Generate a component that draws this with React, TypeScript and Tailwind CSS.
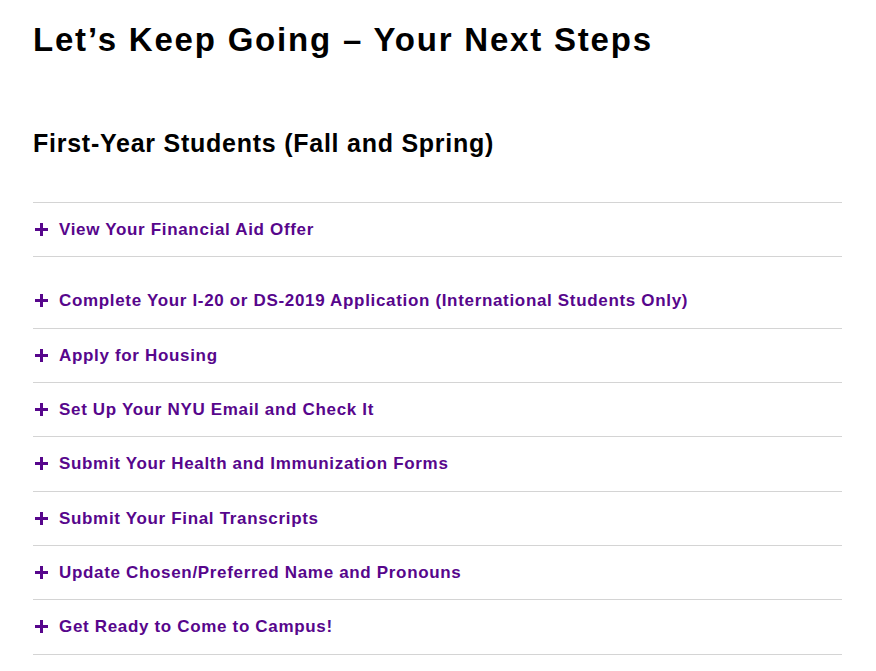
const steps = [
  "View Your Financial Aid Offer",
  "Complete Your I-20 or DS-2019 Application (International Students Only)",
  "Apply for Housing",
  "Set Up Your NYU Email and Check It",
  "Submit Your Health and Immunization Forms",
  "Submit Your Final Transcripts",
  "Update Chosen/Preferred Name and Pronouns",
  "Get Ready to Come to Campus!",
]

function Plus() {
  return (
    <svg width="13" height="13" viewBox="0 0 13 13" className="shrink-0">
      <rect x="5" y="0" width="3" height="13" fill="#57068c" />
      <rect x="0" y="5" width="13" height="3" fill="#57068c" />
    </svg>
  )
}

export default function App() {
  return (
    <div className="min-h-screen bg-white pl-[33px] pr-[34px] pt-[18px] font-['Liberation_Sans',Arial,sans-serif]">
      <h1 className="text-[33px] font-bold leading-[44px] tracking-[1.8px] text-black">Let’s Keep Going – Your Next Steps</h1>
      <h2 className="mt-[65px] text-[25px] font-bold leading-[32px] tracking-[0.75px] text-black">
        First-Year Students (Fall and Spring)
      </h2>
      <ul className="mt-[43px] border-t border-[#d4d4d4]">
        {steps.map((s, i) => (
          <li key={s} className="border-b border-[#d4d4d4]">
            {i === 1 && <div className="h-[17px]" />}
            <button className="flex h-[53.33px] w-full items-center gap-[11px] pl-[2px] text-left text-[17px] font-bold tracking-[0.67px] text-[#57068c]">
              <Plus />
              <span>{s}</span>
            </button>
          </li>
        ))}
      </ul>
    </div>
  )
}
